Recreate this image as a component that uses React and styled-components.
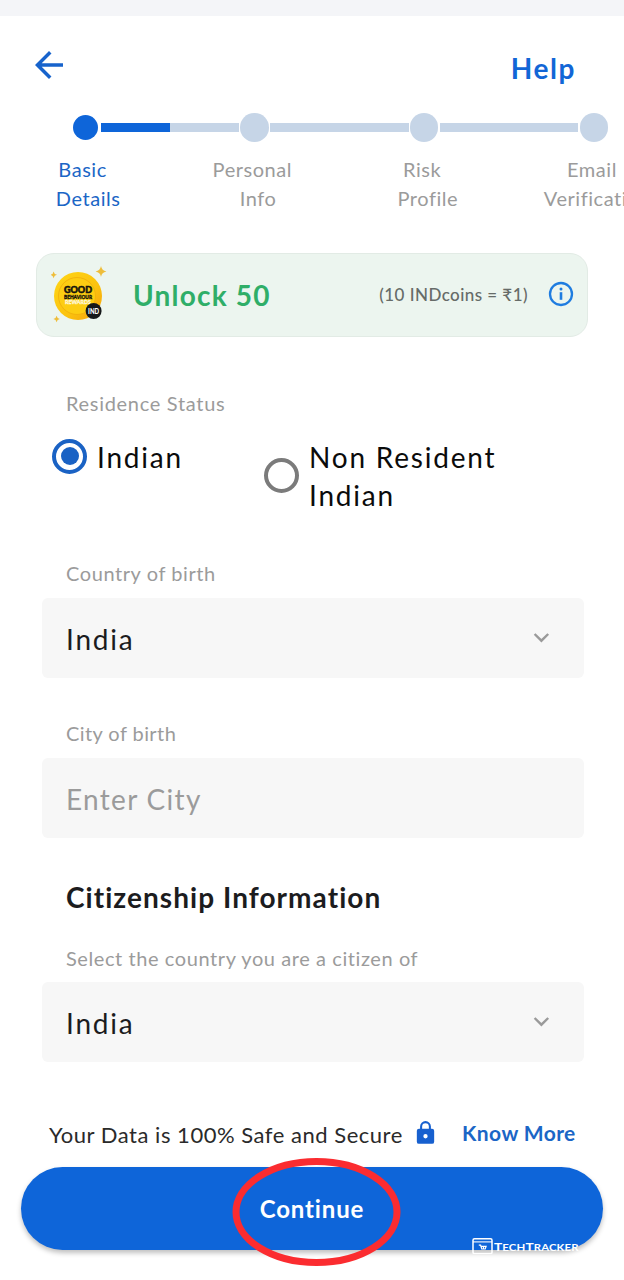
import React from "react";
import styled, { createGlobalStyle } from "styled-components";

const GlobalStyle = createGlobalStyle`
  *, *::before, *::after { box-sizing: border-box; }
  body {
    margin: 0;
    background: #ffffff;
    font-family: Lato, "Liberation Sans", sans-serif;
    overflow: hidden;
  }
`;

const Screen = styled.div`
  width: 624px;
  height: 1280px;
  overflow: hidden;
  display: flex;
  flex-direction: column;
  background: #ffffff;
`;

const StatusStrip = styled.div`
  flex: none;
  height: 16px;
  background: #f4f5f8;
`;

const Header = styled.header`
  flex: none;
  height: 96px;
  padding: 28px 48px 0 28px;
  display: flex;
  justify-content: space-between;
  align-items: flex-start;
`;

const HelpLink = styled.a`
  margin-top: 4px;
  font-size: 28px;
  line-height: 40px;
  font-weight: 700;
  letter-spacing: 1.6px;
  color: #1266d6;
`;

const Track = styled.div`
  flex: none;
  height: 31px;
  padding-left: 69.5px;
  display: flex;
  align-items: center;
`;

const DotCell = styled.div`
  flex: none;
  width: 31px;
  display: flex;
  justify-content: center;
`;

const Dot = styled.div`
  width: ${(p) => (p.$active ? 25 : 28.5)}px;
  height: ${(p) => (p.$active ? 25 : 28.5)}px;
  border-radius: 50%;
  background: ${(p) => (p.$active ? "#0e65d9" : "#c6d5e7")};
`;

const Connector = styled.div`
  flex: none;
  width: 138.6px;
  height: 9px;
  background: ${(p) =>
    p.$half ? "linear-gradient(90deg, #0e65d9 50%, #c6d5e7 50%)" : "#c6d5e7"};
`;

const StepLabels = styled.div`
  flex: none;
  height: 110px;
  padding: 12px 0 0 0.5px;
  display: flex;
`;

const StepLabel = styled.div`
  flex: none;
  width: 169.8px;
  text-align: center;
  white-space: pre;
  font-size: 20px;
  line-height: 28.5px;
  letter-spacing: 0.55px;
  color: ${(p) => (p.$active ? "#1b66c6" : "#9b9b9b")};
`;

const RewardCard = styled.section`
  flex: none;
  height: 84px;
  margin: 0 36px;
  padding: 0 13px 0 14px;
  display: flex;
  align-items: center;
  border: 1px solid #e2ebe5;
  border-radius: 18px;
  background: #ecf5ef;
`;

const RewardTitle = styled.div`
  flex: 1;
  padding-left: 24px;
  font-size: 28px;
  line-height: 40px;
  font-weight: 700;
  letter-spacing: 1.2px;
  color: #2fae68;
`;

const RewardRate = styled.div`
  padding-right: 20px;
  font-size: 17px;
  line-height: 24px;
  font-weight: 500;
  letter-spacing: 0.45px;
  color: #666b68;
`;

const Label = styled.div`
  height: 28px;
  padding-left: 24px;
  font-size: 20px;
  line-height: 28px;
  letter-spacing: ${(p) => p.$spacing ?? 0.58}px;
  color: #9b9b9b;
`;

const Form = styled.main`
  flex: none;
  padding: 52px 40px 0 42px;
`;

const RadioRow = styled.div`
  height: 142px;
  padding: 21px 0 0 10px;
  display: flex;
  align-items: flex-start;
`;

const RadioOption = styled.div`
  display: flex;
  align-items: center;
  gap: 10px;
  width: ${(p) => p.$width}px;
  font-size: 28px;
  line-height: 38px;
  letter-spacing: 1.8px;
  color: #0b0b0b;
`;

const RadioMark = styled.span`
  flex: none;
  width: 35px;
  height: 35px;
  margin-bottom: 2px;
  border: 4px solid ${(p) => (p.$checked ? "#1a62c4" : "#7b7b7b")};
  border-radius: 50%;
  display: flex;
  align-items: center;
  justify-content: center;

  &::after {
    content: "";
    width: 18px;
    height: 18px;
    border-radius: 50%;
    background: ${(p) => (p.$checked ? "#1a62c4" : "transparent")};
  }
`;

const Field = styled.div`
  height: 80px;
  margin: ${(p) => p.$before ?? 11}px 0 ${(p) => p.$after ?? 0}px;
  padding: 1px 32px 0 24px;
  display: flex;
  align-items: center;
  justify-content: space-between;
  border-radius: 6px;
  background: #f7f7f7;
  font-size: 28px;
  letter-spacing: ${(p) => (p.$placeholder ? 1.3 : 1.8)}px;
  color: ${(p) => (p.$placeholder ? "#9b9b9b" : "#1c1c1e")};
`;

const Heading = styled.h2`
  margin: 0;
  height: 67px;
  padding-left: 24px;
  font-size: 28px;
  line-height: 40px;
  font-weight: 700;
  letter-spacing: 1.05px;
  color: #1c1c1e;
`;

const SecureRow = styled.div`
  flex: none;
  height: 104.5px;
  padding: 55px 46px 0 49px;
  display: flex;
  align-items: flex-start;

  svg {
    flex: none;
    margin-top: 3px;
  }
`;

const SecureText = styled.div`
  width: 363px;
  padding-top: 2px;
  white-space: nowrap;
  font-size: 22px;
  line-height: 32px;
  letter-spacing: 0.52px;
  color: #2a2a2a;
`;

const KnowMore = styled.a`
  margin-left: 23px;
  white-space: nowrap;
  font-size: 21px;
  line-height: 32px;
  font-weight: 700;
  letter-spacing: 0.42px;
  color: #1b66c6;
`;

const ActionArea = styled.footer`
  flex: none;
  position: relative;
  padding: 0 21px;
`;

const PrimaryButton = styled.button`
  display: block;
  width: 582px;
  height: 83px;
  padding: 0;
  border: 0;
  border-radius: 42px;
  background: #0e65d9;
  box-shadow: 0 3px 5px rgba(0, 0, 0, 0.25);
  font-family: inherit;
  font-size: 24px;
  font-weight: 700;
  letter-spacing: 0.85px;
  color: #ffffff;
`;

const Highlight = styled.svg`
  position: absolute;
  left: 232px;
  top: -10px;
`;

const Watermark = styled.div`
  position: absolute;
  left: 472px;
  top: 70.5px;
  display: flex;
  align-items: flex-start;
  gap: 1px;
  color: #ffffff;
`;

const WatermarkName = styled.span`
  padding-top: 3px;
  font-size: 12px;
  line-height: 13px;
  font-weight: 700;
  letter-spacing: 0.1px;
  transform: scaleX(1.14);
  transform-origin: left;

  small {
    font-size: 10px;
  }
`;

function BackIcon() {
  return (
    <svg width="42" height="42" viewBox="0 0 24 24" fill="#1763cc">
      <path d="M20 11H7.83l5.59-5.59L12 4l-8 8 8 8 1.41-1.41L7.83 13H20z" />
    </svg>
  );
}

function ChevronIcon() {
  return (
    <svg width="20" height="16" viewBox="0 0 20 16" fill="none">
      <path d="M2.6 3l6.8 6.7L16.2 3" stroke="#9a9a9a" strokeWidth="2.4" />
    </svg>
  );
}

function InfoIcon() {
  return (
    <svg width="26" height="28" viewBox="0 0 26 28" fill="none">
      <circle cx="13" cy="13" r="11" stroke="#1f7ce0" strokeWidth="2.3" />
      <path d="M13 11.2v7.6" stroke="#1f7ce0" strokeWidth="2.6" />
      <circle cx="13" cy="8" r="1.5" fill="#1f7ce0" />
    </svg>
  );
}

function LockIcon() {
  return (
    <svg width="27" height="26" viewBox="0 0 24 24" fill="#1760cf">
      <path d="M18 8h-1V6A5 5 0 0 0 7 6v2H6a2 2 0 0 0-2 2v10a2 2 0 0 0 2 2h12a2 2 0 0 0 2-2V10a2 2 0 0 0-2-2zm-6 9a2 2 0 1 1 0-4 2 2 0 0 1 0 4zm3.1-9H8.9V6a3.1 3.1 0 0 1 6.2 0z" />
    </svg>
  );
}

function CoinIcon() {
  const sparkle = (x, y, r) =>
    `M${x} ${y - r}Q${x + r * 0.15} ${y - r * 0.15} ${x + r} ${y}Q${x + r * 0.15} ${y + r * 0.15} ${x} ${y + r}Q${x - r * 0.15} ${y + r * 0.15} ${x - r} ${y}Q${x - r * 0.15} ${y - r * 0.15} ${x} ${y - r}`;
  return (
    <svg width="58" height="60" viewBox="0 0 58 60">
      <defs>
        <linearGradient id="coin" x1="0" y1="0" x2="1" y2="1">
          <stop offset="0" stopColor="#ffd615" />
          <stop offset="0.6" stopColor="#fbc20f" />
          <stop offset="1" stopColor="#f59f0b" />
        </linearGradient>
      </defs>
      <circle cx="27" cy="31" r="24" fill="url(#coin)" />
      <circle cx="26" cy="31" r="18.5" fill="#fdcd12" stroke="#f3b30c" strokeWidth="1" />
      <g fill="#eebd3a">
        <path d={sparkle(50, 6.5, 5.4)} />
        <path d={sparkle(2.6, 9.8, 3.4)} />
        <path d={sparkle(5.6, 54, 3.2)} />
      </g>
      <g fontFamily="Lato, sans-serif" fontWeight="900" textAnchor="middle">
        <text x="27" y="27.6" fontSize="8.6" fill="#15140c" stroke="#15140c" strokeWidth="0.5" textLength="28" lengthAdjust="spacingAndGlyphs">GOOD</text>
        <text x="27" y="33.6" fontSize="6.4" fill="#15140c" stroke="#15140c" strokeWidth="0.4" textLength="28" lengthAdjust="spacingAndGlyphs">BEHAVIOUR</text>
        <text x="27" y="39.4" fontSize="6.4" fill="#fff8da" stroke="#fff8da" strokeWidth="0.3" textLength="26" lengthAdjust="spacingAndGlyphs">REWARDS</text>
      </g>
      <circle cx="42.6" cy="46" r="8" fill="#15181a" />
      <text x="42.6" y="48.6" fontFamily="Lato, sans-serif" fontWeight="900" fontSize="7" textAnchor="middle" fill="#ffffff" textLength="11" lengthAdjust="spacingAndGlyphs">IND</text>
    </svg>
  );
}

function WatermarkLogo() {
  return (
    <svg width="21" height="17" viewBox="0 0 21 17" fill="none" stroke="#ffffff">
      <rect x="1" y="1.7" width="19" height="15" rx="1.5" strokeWidth="1.5" />
      <path d="M1 4.9h19" strokeWidth="1.1" />
      <path d="M6.8 8.2h1.8l1.2 3.8h3.4l.9-2.6H9.4M11.5 9v3" strokeWidth="1.2" />
    </svg>
  );
}

const steps = ["Basic \n Details", "Personal \n Info", "Risk \n Profile", "Email \n Verification"];

export default function App() {
  return (
    <Screen>
      <GlobalStyle />
      <StatusStrip />
      <Header>
        <BackIcon />
        <HelpLink>Help</HelpLink>
      </Header>
      <Track>
        {steps.map((step, i) => (
          <React.Fragment key={step}>
            {i > 0 && <Connector $half={i === 1} />}
            <DotCell>
              <Dot $active={i === 0} />
            </DotCell>
          </React.Fragment>
        ))}
      </Track>
      <StepLabels>
        {steps.map((step, i) => (
          <StepLabel key={step} $active={i === 0}>
            {step}
          </StepLabel>
        ))}
      </StepLabels>
      <RewardCard>
        <CoinIcon />
        <RewardTitle>Unlock 50</RewardTitle>
        <RewardRate>(10 INDcoins = ₹1)</RewardRate>
        <InfoIcon />
      </RewardCard>
      <Form>
        <Label $spacing={0.7}>Residence Status</Label>
        <RadioRow>
          <RadioOption $width={212}>
            <RadioMark $checked />
            <span>Indian</span>
          </RadioOption>
          <RadioOption $width={260}>
            <RadioMark />
            <span>Non Resident Indian</span>
          </RadioOption>
        </RadioRow>
        <Label>Country of birth</Label>
        <Field $after={41}>
          India <ChevronIcon />
        </Field>
        <Label $spacing={0.42}>City of birth</Label>
        <Field $placeholder $after={39}>
          Enter City
        </Field>
        <Heading>Citizenship Information</Heading>
        <Label>Select the country you are a citizen of</Label>
        <Field $before={10}>
          India <ChevronIcon />
        </Field>
      </Form>
      <SecureRow>
        <SecureText>Your Data is 100% Safe and Secure</SecureText>
        <LockIcon />
        <KnowMore>Know More</KnowMore>
      </SecureRow>
      <ActionArea>
        <PrimaryButton>Continue</PrimaryButton>
        <Highlight width="170" height="110" viewBox="0 0 170 110" fill="none">
          <ellipse cx="84.5" cy="55" rx="80.5" ry="50.5" stroke="#fb2c30" strokeWidth="7" />
        </Highlight>
        <Watermark>
          <WatermarkLogo />
          <WatermarkName>
            T<small>ECH</small>T<small>RACKER</small>
          </WatermarkName>
        </Watermark>
      </ActionArea>
    </Screen>
  );
}
